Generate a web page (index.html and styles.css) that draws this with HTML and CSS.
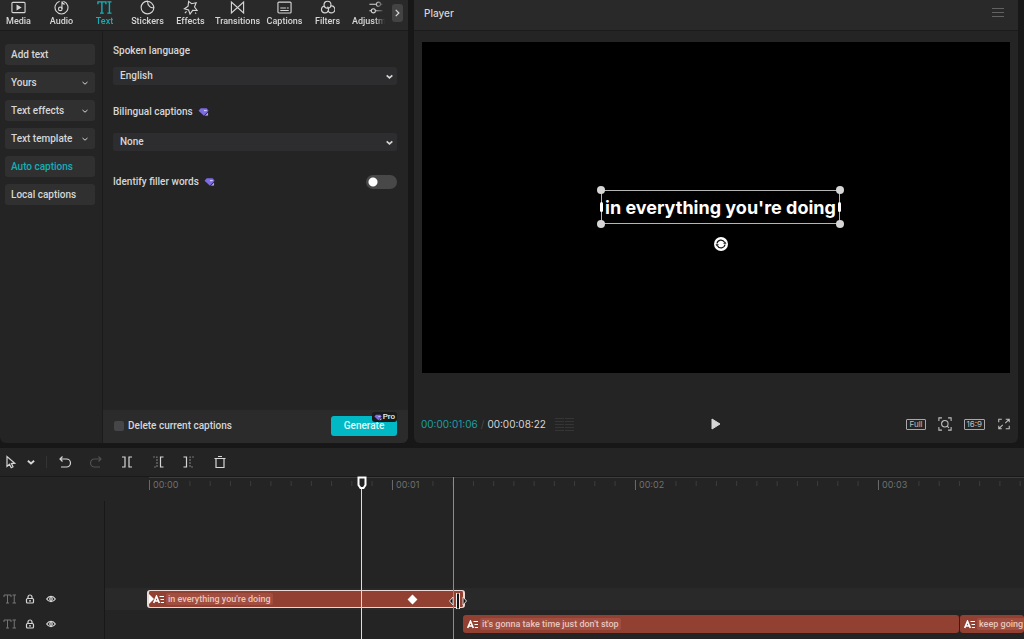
FILE: index.html
```html
<!DOCTYPE html>
<html lang="en">
  <head>
    <meta charset="UTF-8" />
    <meta name="viewport" content="width=device-width, initial-scale=1" />
    <title>Video editor</title>
    <link rel="stylesheet" href="styles.css">
  </head>
  <body>
    <!-- shared icons -->
    <svg class="defs" width="0" height="0">
      <symbol id="chevron" viewBox="0 0 8 8"><path d="M1.500 3 4 5.200 6.500 3" /></symbol>
      <symbol id="gem" viewBox="0 0 12 10">
        <path d="M3 .8h6.500L11.500 3.500 6.500 9.200.6 3.500z" fill="#7b6be6" stroke="none" />
        <path d="M6.500 3.500h3" fill="none" stroke="#e8e0ff" stroke-width="1" />
        <path d="M7.500 9.200 11 5.500v3.200z" fill="#c6a0ed" stroke="none" />
      </symbol>
      <symbol id="text-track" viewBox="0 0 14 12">
        <path d="M1 4V2h7v2M4.500 2v8M3 10h3M9.500 2H13M11.250 2v8M9.500 10H13" />
      </symbol>
      <symbol id="lock" viewBox="0 0 10 10">
        <rect x="1.500" y="4.500" width="7" height="4.500" rx="1" /><path d="M3 4.500V3a2 2 0 0 1 4 0v1.500M4 6.800h2" />
      </symbol>
      <symbol id="eye" viewBox="0 0 10 10">
        <path d="M.7 5C2.800 1.500 7.200 1.500 9.300 5 7.200 8.500 2.800 8.500.7 5z" /><circle cx="5" cy="5" r="1.300" />
      </symbol>
      <symbol id="caption-clip" viewBox="0 0 11 9">
        <path d="M.7 8 3.500 1.200 6.300 8M1.800 6h3.500" stroke-width="1.600" /><path d="M6.500 1.500H11M7.500 4.500H11M7.800 7.500H11" />
      </symbol>
    </svg>

    <main class="workspace">
      <section class="panel library">
        <header class="panel-head">
          <nav class="tools">
            <button class="tool">
              <svg viewBox="0 0 16 16"><rect x="1" y="2.500" width="14" height="11" rx="1" /><path d="M6.500 5.800v4.400L10.200 8z" fill="currentColor" /></svg>
              Media
            </button>
            <button class="tool">
              <svg viewBox="0 0 16 16"><path d="M10 1.400A6.900 6.900 0 1 1 6 1.400M8.500 9.500V1.500c.2 2 1.500 2.800 3 3" /><circle cx="6.700" cy="9.500" r="1.900" /></svg>
              Audio
            </button>
            <button class="tool active">
              <svg viewBox="0 0 16 16"><path d="M1 4.500V2h8.500v2.500M5.200 2v12M3.200 14h4M11 2h4.500M13.250 2v12M11 14h4.500" /></svg>
              Text
            </button>
            <button class="tool">
              <svg viewBox="0 0 16 16"><path d="M8 1.200a6.800 6.800 0 1 0 6.800 6.800C12 8.800 8 7 8 1.200zM8 1.200c3 .2 6.500 3.500 6.800 6.800" /></svg>
              Stickers
            </button>
            <button class="tool">
              <svg viewBox="0 0 16 16"><path d="M6 1.500 9.200 4 14 3l-1.700 4.500 2.700 3.700-4.700-.1L7.500 15 6 10.700 1.500 9.300 5.400 6.600zM2 14l1.800-1.800M13 13.500l1 1" /></svg>
              Effects
            </button>
            <button class="tool">
              <svg viewBox="0 0 16 16"><path d="M1.500 2.200v11.600L14.500 2.200v11.600z" /></svg>
              Transitions
            </button>
            <button class="tool">
              <svg viewBox="0 0 16 16"><rect x="1" y="2.200" width="14" height="11.600" rx="1" /><path d="M3.500 8.500h6M10.500 8.500h2M3.500 11.200h9" /></svg>
              Captions
            </button>
            <button class="tool">
              <svg viewBox="0 0 16 16"><circle cx="8" cy="5" r="3.700" /><path d="M4.700 6.400a3.700 3.700 0 1 0 4 5c.7-1.600.4-3-.7-4.200M11.300 6.400a3.700 3.700 0 1 1-2.600 5" /></svg>
              Filters
            </button>
            <button class="tool">
              <svg viewBox="0 0 16 16"><path d="M1.500 4.500H9M13.500 4.500h2M1.500 11.500h2M8 11.500h7.500" /><circle cx="11.200" cy="4.500" r="2.200" /><circle cx="5.700" cy="11.500" r="2.200" /></svg>
              Adjustment
            </button>
          </nav>
          <button class="more" aria-label="More tools"><svg viewBox="0 0 8 8"><path d="M3 1.500 5.500 4 3 6.500" /></svg></button>
        </header>

        <div class="library-body">
          <aside class="menu">
            <button class="menu-item">Add text</button>
            <button class="menu-item">Yours <svg><use href="#chevron" /></svg></button>
            <button class="menu-item">Text effects <svg><use href="#chevron" /></svg></button>
            <button class="menu-item">Text template <svg><use href="#chevron" /></svg></button>
            <button class="menu-item active">Auto captions</button>
            <button class="menu-item">Local captions</button>
          </aside>

          <form class="captions">
            <div class="fields">
              <label for="spoken">Spoken language</label>
              <div class="select">
                <select id="spoken"><option>English</option></select>
                <svg><use href="#chevron" /></svg>
              </div>
              <label for="bilingual">Bilingual captions <svg class="gem"><use href="#gem" /></svg></label>
              <div class="select">
                <select id="bilingual"><option>None</option></select>
                <svg><use href="#chevron" /></svg>
              </div>
              <div class="switch-row">
                <label for="filler">Identify filler words <svg class="gem"><use href="#gem" /></svg></label>
                <input type="checkbox" id="filler" class="switch">
              </div>
            </div>
            <footer class="actions">
              <input type="checkbox" id="delete" class="check">
              <label for="delete">Delete current captions</label>
              <button type="button" class="generate">
                Generate
                <span class="pro"><svg class="gem"><use href="#gem" /></svg>Pro</span>
              </button>
            </footer>
          </form>
        </div>
      </section>

      <section class="panel player">
        <header class="panel-head">
          <h2>Player</h2>
          <button class="icon" aria-label="Player menu"><svg viewBox="0 0 12 12"><path d="M0 1.500h12M0 5.500h12M0 9.500h12" /></svg></button>
        </header>
        <div class="screen">
          <div class="caption">
            in everything you're doing
            <i class="dot tl"></i><i class="dot tr"></i><i class="dot bl"></i><i class="dot br"></i>
            <i class="grip left"></i><i class="grip right"></i>
            <svg class="rotate" viewBox="0 0 14 14">
              <circle cx="7" cy="7" r="7" fill="#fff" />
              <path d="M3 6.500a4 4 0 0 1 7.500-1.200M11 7.500a4 4 0 0 1-7.500 1.200" fill="none" stroke="#111" stroke-width="1.200" />
              <path d="M9.200 6.700h3.300L11 4.500zM4.800 7.300H1.500L3 9.500z" fill="#111" />
            </svg>
          </div>
        </div>
        <footer class="transport">
          <time class="now">00:00:01:06</time>
          <span class="slash">/</span>
          <time>00:00:08:22</time>
          <svg class="meter" viewBox="0 0 19 14"><path d="M0 1.500h9M10 1.500h9M0 4.500h9M10 4.500h9M0 7.500h9M10 7.500h9M0 10.500h9M10 10.500h9M0 13.500h9M10 13.500h9" /></svg>
          <button class="play" aria-label="Play"><svg viewBox="0 0 10 12"><path d="M1 1v10l8-5z" /></svg></button>
          <div class="view">
            <button class="boxed">Full</button>
            <button class="icon" aria-label="Zoom"><svg viewBox="0 0 16 16"><path d="M1 4.500V1h3.500M11.500 1H15v3.500M15 11.500V15h-3.500M4.500 15H1v-3.500" /><circle cx="7.800" cy="7.800" r="3.700" /><path d="M10.500 10.500 12.500 12.500" /></svg></button>
            <button class="boxed">16:9</button>
            <button class="icon" aria-label="Full screen"><svg viewBox="0 0 16 16"><path d="M2 6V2.500h3.500M10 2.500h4V6M14 10v3.500h-4M5.500 13.500H2V10M14 2.500 9.500 7M2 13.500 6.500 9" /></svg></button>
          </div>
        </footer>
      </section>
    </main>

    <section class="timeline">
      <div class="edit-bar">
        <button class="icon pointer" aria-label="Select"><svg viewBox="0 0 14 14"><path d="M3 1.500v10l2.500-2.200 1.700 3.400 1.800-.9-1.600-3.200 3.400-.4z" /></svg></button>
        <button class="icon small bold" aria-label="Select options"><svg><use href="#chevron" /></svg></button>
        <span class="divider"></span>
        <button class="icon" aria-label="Undo"><svg viewBox="0 0 14 14"><path d="M4.500 1.500 2 4l2.500 2.500M2 4h6.500a4 4 0 0 1 0 8H3" /></svg></button>
        <button class="icon" aria-label="Redo" disabled><svg viewBox="0 0 14 14"><path d="M9.500 1.500 12 4 9.500 6.500M12 4H5.500a4 4 0 0 0 0 8H11" /></svg></button>
        <button class="icon" aria-label="Split"><svg viewBox="0 0 14 14"><path d="M2 2h3v10H2M12 2H9v10h3" /></svg></button>
        <button class="icon" aria-label="Delete left"><svg viewBox="0 0 14 14"><path d="M12.500 2h-3v10h3" /><path d="M2 2h4v10H2" stroke-dasharray="2 1" opacity=".45" /></svg></button>
        <button class="icon" aria-label="Delete right"><svg viewBox="0 0 14 14"><path d="M1.500 2h3v10h-3" /><path d="M12 2H8v10h4" stroke-dasharray="2 1" opacity=".45" /></svg></button>
        <button class="icon" aria-label="Delete"><svg viewBox="0 0 14 14"><path d="M1.500 3.500h11M3 3.500V12.500h8V3.500M5 1.500h4" /></svg></button>
      </div>

      <div class="ruler">
        <div class="second"><span>00:00</span></div>
        <div class="second"><span>00:01</span></div>
        <div class="second"><span>00:02</span></div>
        <div class="second"><span>00:03</span></div>
      </div>

      <div class="tracks">
        <div class="track selected">
          <div class="track-head">
            <svg class="kind"><use href="#text-track" /></svg>
            <button class="icon small" aria-label="Lock track 1"><svg><use href="#lock" /></svg></button>
            <button class="icon small" aria-label="Hide track 1"><svg><use href="#eye" /></svg></button>
          </div>
          <div class="lane first">
            <div class="clip current">
              <svg><use href="#caption-clip" /></svg><span>in everything you're doing</span>
              <i class="keyframe"></i>
            </div>
          </div>
        </div>
        <div class="track">
          <div class="track-head">
            <svg class="kind"><use href="#text-track" /></svg>
            <button class="icon small" aria-label="Lock track 2"><svg><use href="#lock" /></svg></button>
            <button class="icon small" aria-label="Hide track 2"><svg><use href="#eye" /></svg></button>
          </div>
          <div class="lane next">
            <div class="clip stop"><svg><use href="#caption-clip" /></svg><span>it's gonna take time just don't stop</span></div>
            <div class="clip rest"><svg><use href="#caption-clip" /></svg><span>keep going</span></div>
          </div>
        </div>
      </div>

      <div class="guide"></div>
      <div class="playhead"><svg viewBox="0 0 10 14"><path d="M1.500 1.500h7v7.500L6.500 12h-3L1.500 9z" /></svg></div>
      <svg class="cursor" viewBox="0 0 20 18">
        <path d="M5 5 1.500 9 5 13zM15 5l3.500 4-3.500 4z" fill="#111" stroke="#ddd" />
        <path d="M10 1v16" stroke="#eee" stroke-width="4" /><path d="M10 1.500v15" stroke="#111" stroke-width="2" />
      </svg>
    </section>
  </body>
</html>
```
FILE: styles.css
```css
* {
  box-sizing: border-box;
}
body {
  margin: 0;
  min-height: 100vh;
  display: flex;
  flex-direction: column;
  background: #171717;
  color: #d6d6d6;
  font: 500 10px/14px Roboto, "Liberation Sans", sans-serif;
  overflow: hidden;
}
button,
select {
  border: 0;
  padding: 0;
  margin: 0;
  background: none;
  color: inherit;
  font: inherit;
}
svg {
  display: block;
  flex: none;
  fill: none;
  stroke: currentColor;
}
.defs {
  position: absolute;
}

/* top half */
.workspace {
  flex: 1;
  display: flex;
  gap: 6px;
  padding: 0 6px 5px 0;
}
.panel {
  display: flex;
  flex-direction: column;
  background: #242424;
  border-radius: 0 0 6px 6px;
  overflow: hidden;
}
.panel-head {
  height: 31px;
  display: flex;
  background: #292929;
  border-bottom: 1px solid #1b1b1b;
}
.library {
  flex: 0 0 408px;
}
.tools {
  display: flex;
  width: 388px;
  margin-left: -3px;
  overflow: hidden;
  -webkit-mask-image: linear-gradient(to left, transparent, #000 10px);
  mask-image: linear-gradient(to left, transparent, #000 10px);
}
.tool {
  flex: none;
  min-width: 43px;
  padding: 0 3px;
  display: flex;
  flex-direction: column;
  align-items: center;
  font-size: 9px;
  line-height: 12px;
}
.tool svg {
  width: 15px;
  height: 15px;
  stroke-width: 1.2;
}
.active {
  color: #14aeb7;
}
.tool.active svg {
  stroke-width: 1.5;
}
.more {
  width: 11px;
  height: 18px;
  margin: 4px 0 0 7px;
  border-radius: 3px;
  background: #434343;
}
.more svg {
  width: 10px;
  height: 10px;
}
.library-body {
  flex: 1;
  display: flex;
}
.menu {
  width: 103px;
  padding: 13px 7px 0 5px;
  border-right: 1px solid #1b1b1b;
  display: flex;
  flex-direction: column;
  gap: 7px;
}
.menu-item {
  height: 21px;
  padding: 0 6px;
  display: flex;
  align-items: center;
  justify-content: space-between;
  border-radius: 3px;
  background: #303030;
}
.menu-item svg {
  width: 8px;
  height: 8px;
}
.captions {
  flex: 1;
  display: flex;
  flex-direction: column;
}
.fields {
  flex: 1;
  padding: 13px 11px 0 10px;
}
.fields label {
  display: flex;
  align-items: center;
  gap: 5px;
}
.gem {
  width: 11px;
  height: 10px;
}
.select {
  position: relative;
  margin: 9px 0 20px;
}
.select + label + .select {
  margin: 14px 0 24px;
}
.select select {
  appearance: none;
  display: block;
  width: 100%;
  height: 18px;
  padding: 0 7px;
  border-radius: 2px;
  background: #2d2c2e;
}
.select svg {
  position: absolute;
  right: 3px;
  top: 5px;
  width: 9px;
  height: 9px;
  stroke-width: 1.5;
}
.switch-row {
  display: flex;
  align-items: center;
  justify-content: space-between;
}
.switch {
  appearance: none;
  width: 31px;
  height: 14px;
  margin: 0;
  border-radius: 7px;
  background: radial-gradient(circle at 7px 7px, #fff 4px, #484848 5px);
}
.actions {
  height: 33px;
  padding: 0 11px 1px;
  display: flex;
  align-items: center;
  background: #2b2b2b;
}
.check {
  appearance: none;
  width: 10px;
  height: 10px;
  margin: 0 4px 0 0;
  border-radius: 2px;
  background: #464648;
}
.generate {
  position: relative;
  width: 66px;
  height: 20px;
  margin-left: auto;
  border-radius: 3px;
  background: #00b9c4;
  color: #e4f8f9;
}
.pro {
  position: absolute;
  right: 0;
  top: -4px;
  display: flex;
  align-items: center;
  gap: 1px;
  padding: 0 2px;
  border-radius: 3px;
  background: #1b1b1b;
  font-size: 8px;
  line-height: 10px;
}
.pro .gem {
  width: 8px;
  height: 7px;
}

/* player */
.player {
  position: relative;
  flex: 1;
}
.player .panel-head {
  align-items: center;
  justify-content: space-between;
  padding: 0 12px 4px 10px;
  font-family: Inter, sans-serif;
}
h2 {
  margin: 0;
  font: inherit;
}
.icon {
  width: 16px;
  height: 16px;
  display: flex;
  align-items: center;
  justify-content: center;
}
.icon svg {
  width: 14px;
  height: 14px;
  stroke-width: 1.2;
}
.player .panel-head svg {
  width: 12px;
  height: 12px;
  color: #626262;
}
.screen {
  position: relative;
  margin: 11px 8px 0;
  aspect-ratio: 16 / 9;
  background: #000;
}
.caption {
  position: absolute;
  left: 179px;
  top: 148px;
  width: 239px;
  height: 34px;
  border: 1px solid #b5b5b5;
  color: #fff;
  font-family: Inter, sans-serif;
  font-size: 18px;
  font-weight: 700;
  line-height: 33px;
  text-align: center;
  white-space: nowrap;
}
.dot,
.grip,
.rotate {
  position: absolute;
}
.dot {
  width: 8px;
  height: 8px;
  border-radius: 50%;
  background: #d6d6d6;
}
.tl { left: -5px; top: -5px; }
.tr { right: -5px; top: -5px; }
.bl { left: -5px; bottom: -5px; }
.br { right: -5px; bottom: -5px; }
.grip {
  top: 11px;
  width: 3px;
  height: 10px;
  border-radius: 2px;
  background: #fff;
}
.left { left: -2px; }
.right { right: -2px; }
.rotate {
  left: 112px;
  top: 46px;
  width: 14px;
  height: 14px;
  stroke: none;
}
.transport {
  margin-top: auto;
  height: 38px;
  padding: 0 6px 0 7px;
  display: flex;
  align-items: center;
  font-family: Inter, sans-serif;
  font-weight: 400;
}
.now {
  color: #1a9fa7;
}
.slash {
  padding: 0 3px;
  color: #4a4a4a;
}
.meter {
  width: 19px;
  height: 14px;
  margin-left: 9px;
  color: #353535;
}
.play {
  position: absolute;
  left: 50%;
  bottom: 13px;
  margin-left: -5px;
}
.play svg {
  width: 10px;
  height: 12px;
  fill: #d6d6d6;
}
.view {
  margin-left: auto;
  display: flex;
  align-items: center;
  gap: 11px;
  color: #c0c0c0;
}
.boxed {
  padding: 0 2px;
  border: 1px solid #a8a8a8;
  border-radius: 1px;
  font-size: 8px;
  line-height: 9px;
}

/* timeline */
.timeline {
  position: relative;
  height: 191px;
  display: flex;
  flex-direction: column;
  background: #242424;
  overflow: hidden;
}
.edit-bar {
  height: 29px;
  padding-left: 3px;
  display: flex;
  align-items: center;
  gap: 15px;
  border-bottom: 1px solid #191919;
}
.small svg {
  width: 10px;
  height: 10px;
}
.bold svg {
  stroke-width: 1.5;
}
.pointer {
  margin-right: -11px;
}
.divider {
  width: 1px;
  height: 12px;
  margin: 0 -5px 0 -8px;
  background: #343434;
}
.icon:disabled {
  color: #505050;
}
.ruler {
  margin-left: 149px;
  height: 14px;
  display: flex;
  border-top: 1px solid #4f3d10;
  color: #707070;
  font-family: Inter, sans-serif;
  font-size: 9px;
  font-weight: 400;
}
.second {
  flex: 0 0 243px;
  background: linear-gradient(to right, #3c3c3c 1px, transparent 1px) 0 3px / calc(100% / 12) 5px repeat-x;
}
.second span {
  display: block;
  width: 32px;
  margin-top: 2px;
  padding-left: 3px;
  border-left: 1px solid #686868;
  background: #242424;
  line-height: 10px;
}
.tracks {
  position: relative;
  flex: 1;
  display: flex;
  flex-direction: column;
  justify-content: flex-end;
  gap: 3px;
  padding-bottom: 4px;
}
.tracks::before {
  content: "";
  position: absolute;
  left: 104px;
  top: 10px;
  bottom: 0;
  border-left: 1px solid #181818;
}
.track {
  display: flex;
  height: 22px;
}
.track-head {
  flex: 0 0 105px;
  display: flex;
  align-items: center;
  gap: 5px;
  padding-left: 3px;
}
.kind {
  width: 14px;
  height: 12px;
  color: #747474;
}
.lane {
  flex: 1;
  display: flex;
  align-items: center;
  gap: 1px;
  min-width: 0;
}
.selected .lane {
  background: #292929;
}
.first {
  padding-left: 42px;
}
.next {
  padding-left: 358px;
}
.clip {
  position: relative;
  height: 18px;
  padding-left: 4px;
  display: flex;
  align-items: center;
  gap: 2px;
  border-radius: 3px;
  background: #914032;
  color: #e8c6be;
  font-size: 9px;
  font-weight: 500;
  white-space: nowrap;
  overflow: hidden;
}
.clip svg {
  width: 11px;
  height: 9px;
  color: #fff;
}
.clip span {
  padding: 0 2px;
  border-radius: 2px;
  background: #a14e40;
  line-height: 12px;
}
.current {
  width: 318px;
  border: 1px solid #ead9d5;
  border-width: 1px 2px;
}
.current::before {
  content: "";
  position: absolute;
  left: 0;
  top: 3px;
  border: 5px solid transparent;
  border-left-color: #fff;
  border-right-width: 0;
}
.keyframe {
  position: absolute;
  left: 260px;
  top: 5px;
  width: 7px;
  height: 7px;
  background: #fff;
  transform: rotate(45deg);
}
.stop {
  width: 496px;
}
.rest {
  flex: 1;
}
.guide,
.playhead {
  position: absolute;
  top: 29px;
  bottom: 0;
}
.guide {
  left: 453px;
  width: 1px;
  background: #b98a1c;
}
.playhead {
  left: 357px;
  width: 10px;
  background: linear-gradient(#ddd, #ddd) 4px 10px / 1px 100% no-repeat;
}
.playhead svg {
  width: 10px;
  height: 14px;
  margin-top: -1px;
  fill: #242424;
  stroke: #fff;
  stroke-width: 2;
}
.cursor {
  position: absolute;
  left: 448px;
  top: 144px;
  width: 20px;
  height: 18px;
}
```
